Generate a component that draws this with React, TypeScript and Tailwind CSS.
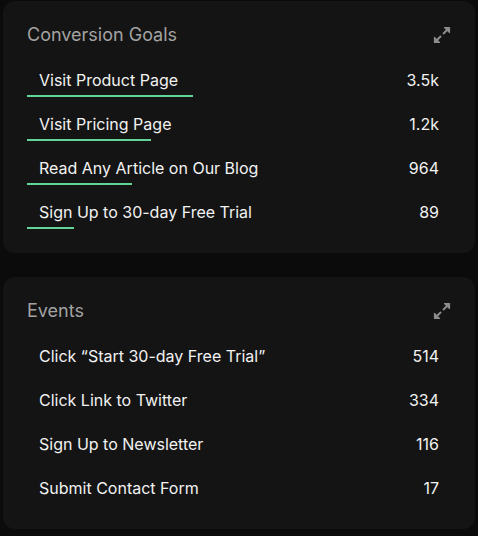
import React from 'react';

interface Row {
  label: string;
  value: string;
  bar?: number;
}

const goals: Row[] = [
  { label: 'Visit Product Page', value: '3.5k', bar: 166 },
  { label: 'Visit Pricing Page', value: '1.2k', bar: 124 },
  { label: 'Read Any Article on Our Blog', value: '964', bar: 105 },
  { label: 'Sign Up to 30-day Free Trial', value: '89', bar: 47 },
];

const events: Row[] = [
  { label: 'Click “Start 30-day Free Trial”', value: '514' },
  { label: 'Click Link to Twitter', value: '334' },
  { label: 'Sign Up to Newsletter', value: '116' },
  { label: 'Submit Contact Form', value: '17' },
];

function ExpandIcon() {
  return (
    <svg width="18" height="18" viewBox="0 0 18 18" fill="none" className="text-[#8c8c8c]">
      <path d="M10 8L15 3" stroke="currentColor" strokeWidth="2" />
      <path d="M11.5 1.5H16.5V6.5Z" fill="currentColor" stroke="currentColor" strokeWidth="1.2" strokeLinejoin="round" />
      <path d="M8 10L3 15" stroke="currentColor" strokeWidth="2" />
      <path d="M1.5 11.5V16.5H6.5Z" fill="currentColor" stroke="currentColor" strokeWidth="1.2" strokeLinejoin="round" />
    </svg>
  );
}

function Card({ title, rows }: { title: string; rows: Row[] }) {
  return (
    <div className="bg-[#141414] rounded-[12px] px-6 pt-[22px] pb-5">
      {/* Header */}
      <div className="flex items-center justify-between h-6">
        <h2 className="text-[18px] leading-6 text-[#a3a3a3]">{title}</h2>
        <ExpandIcon />
      </div>

      {/* Rows */}
      <div className="mt-[10px]">
        {rows.map((row) => (
          <div key={row.label} className="h-[44px] flex flex-col">
            <div className="mt-[11px] h-6 flex items-center justify-between px-3 text-[16px] text-[#f2f2f2]">
              <span>{row.label}</span>
              <span>{row.value}</span>
            </div>
            {row.bar !== undefined && (
              <div className="mt-[3px] h-[2px] bg-[#62d49a]" style={{ width: row.bar }} />
            )}
          </div>
        ))}
      </div>
    </div>
  );
}

export default function App() {
  return (
    <div
      className="min-h-screen w-[478px] bg-[#0b0b0b] px-[3px] pt-[1px] flex flex-col gap-[24px]"
      style={{ fontFamily: 'Inter, "Noto Sans", sans-serif' }}
    >
      <Card title="Conversion Goals" rows={goals} />
      <Card title="Events" rows={events} />
    </div>
  );
}
